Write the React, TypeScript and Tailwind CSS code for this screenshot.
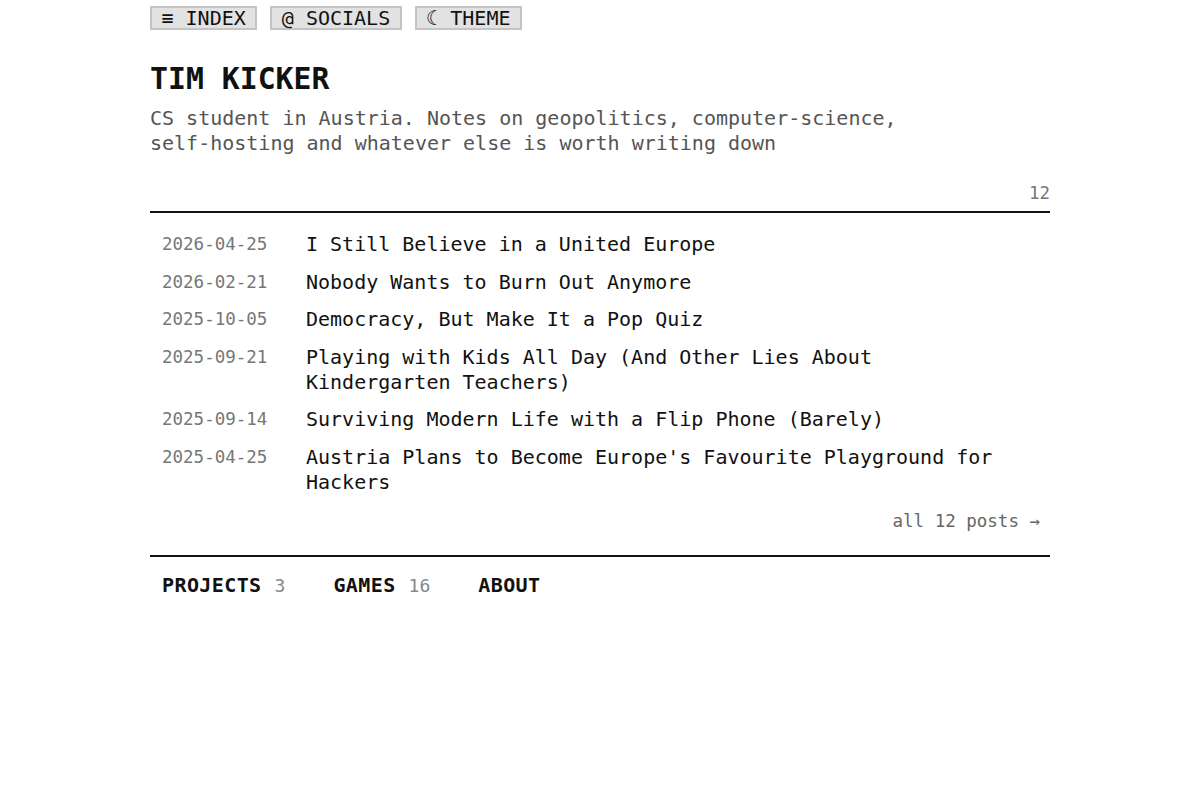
const POSTS = [
  { date: "2026-04-25", title: "I Still Believe in a United Europe" },
  { date: "2026-02-21", title: "Nobody Wants to Burn Out Anymore" },
  { date: "2025-10-05", title: "Democracy, But Make It a Pop Quiz" },
  { date: "2025-09-21", title: "Playing with Kids All Day (And Other Lies About Kindergarten Teachers)" },
  { date: "2025-09-14", title: "Surviving Modern Life with a Flip Phone (Barely)" },
  { date: "2025-04-25", title: "Austria Plans to Become Europe's Favourite Playground for Hackers" },
];

const NAV = [
  { label: "≡ INDEX" },
  { label: "@ SOCIALS" },
  { label: "☾ THEME" },
];

const SECTIONS = [
  { label: "PROJECTS", count: "3" },
  { label: "GAMES", count: "16" },
  { label: "ABOUT", count: "" },
];

export default function App() {
  return (
    <div className="min-h-screen bg-white text-[#111] font-['DejaVu_Sans_Mono','Liberation_Mono',monospace]">
      <div className="mx-auto w-[900px] pt-[6px]">
        <nav className="flex items-center gap-[13px]">
          {NAV.map((n) => (
            <button
              key={n.label}
              type="button"
              className="h-[24px] border-2 border-[#c4c4c4] bg-[#e2e2e2] px-[9.5px] text-[20px] leading-[20px] text-[#111]"
            >
              {n.label}
            </button>
          ))}
        </nav>

        <header className="mt-[30px]">
          <h1 className="text-[29.8px] leading-[38px] font-bold">TIM KICKER</h1>
          <p className="mt-[8px] w-[760px] text-[20px] leading-[25px] text-[#555]">
            CS student in Austria. Notes on geopolitics, computer-science, self-hosting and whatever else is worth writing down
          </p>
        </header>

        <section className="mt-[26px]">
          <div className="flex justify-end border-b-2 border-[#111] pb-[7px] text-[17.5px] leading-[22px] text-[#777]">
            12
          </div>
          <ul className="pt-[13px]">
            {POSTS.map((p) => (
              <li key={p.date} className="flex pl-3 pr-[40px] py-[6.25px]">
                <span className="w-[144px] shrink-0 text-[17.5px] leading-[25px] text-[#777]">{p.date}</span>
                <a className="flex-1 text-[20px] leading-[25px] text-[#111]">{p.title}</a>
              </li>
            ))}
          </ul>
          <div className="flex justify-end px-[10px] pt-[8px] text-[17.5px] leading-[25px] text-[#666]">
            all 12 posts →
          </div>
        </section>

        <footer className="mt-[21px] border-t-2 border-[#111] px-3 pt-[16px]">
          <div className="flex items-center gap-[48px]">
            {SECTIONS.map((s) => (
              <div key={s.label} className="flex items-baseline gap-[13px]">
                <span className="text-[20px] leading-[25px] font-bold tracking-[0.4px]">{s.label}</span>
                {s.count && <span className="text-[18px] leading-[25px] text-[#888]">{s.count}</span>}
              </div>
            ))}
          </div>
        </footer>
      </div>
    </div>
  );
}
